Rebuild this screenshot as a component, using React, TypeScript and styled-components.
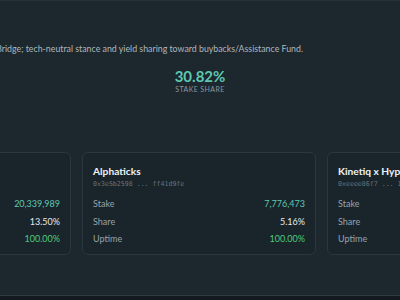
import styled, { createGlobalStyle } from 'styled-components'

const GlobalStyle = createGlobalStyle`
	html, body {
		margin: 0;
		padding: 0;
		background: #131b21;
		width: 400px;
		height: 300px;
		overflow: hidden;
		font-family: Lato, "Noto Sans", sans-serif;
	}
`

const Panel = styled.section`
	height: 294px;
	border-top: 1px solid #24323a;
	border-bottom: 1px solid #2c3a43;
	background: #1c272e;
	overflow: hidden;
	display: flex;
	flex-direction: column;
`

const Description = styled.p`
	margin: 40px 0 0 -40px;
	white-space: nowrap;
	font-size: 8.8px;
	line-height: 16px;
	color: #aeb8bf;
`

const Stat = styled.div`
	display: flex;
	flex-direction: column;
	align-items: center;
	margin-top: 9px;
`

const StatValue = styled.div`
	font-size: 15px;
	font-weight: 700;
	line-height: 20px;
	color: #5ec8b2;
`

const StatLabel = styled.div`
	margin-top: -3px;
	font-size: 7px;
	line-height: 12px;
	letter-spacing: 0.4px;
	color: #8a979f;
	text-transform: uppercase;
`

const CardRow = styled.div`
	display: flex;
	gap: 11px;
	margin: 57px 0 0 -163px;
`

const Card = styled.div`
	flex: 0 0 234px;
	box-sizing: border-box;
	height: 103px;
	padding: 10px 10px 0 10px;
	border: 1px solid #2a3740;
	border-radius: 6px;
	background: #1a252b;
`

const Title = styled.div`
	font-size: 10.2px;
	font-weight: 700;
	line-height: 16px;
	color: #eef2f4;
	white-space: nowrap;
`

const Address = styled.div`
	margin-top: -1px;
	font-family: "DejaVu Sans Mono", "Liberation Mono", monospace;
	font-size: 6.6px;
	line-height: 12px;
	color: #66747d;
	white-space: nowrap;
`

const Rows = styled.div`
	display: flex;
	flex-direction: column;
	margin-top: 5px;
`

const Row = styled.div`
	display: flex;
	justify-content: space-between;
	align-items: center;
	height: 17.6px;
	font-size: 9px;
`

const Label = styled.span`
	color: #97a3ab;
`

const Value = styled.span<{ $tone: 'teal' | 'plain' | 'green' }>`
	color: ${p => (p.$tone === 'teal' ? '#5ec8b2' : p.$tone === 'green' ? '#4ec97a' : '#e6eaec')};
`

interface Validator {
	name: string
	address: string
	stake: string
	share: string
	uptime: string
}

const validators: Validator[] = [
	{ name: 'Hyper Foundation 1', address: '0x5ac99df6 ... 2b8c6a1e', stake: '20,339,989', share: '13.50%', uptime: '100.00%' },
	{ name: 'Alphaticks', address: '0x3e5b2598 ... ff41d9fe', stake: '7,776,473', share: '5.16%', uptime: '100.00%' },
	{ name: 'Kinetiq x Hyperion', address: '0xeeee86f7 ... 1c7e5d42', stake: '6,912,204', share: '4.59%', uptime: '100.00%' },
]

export default function App() {
	return (
		<>
			<GlobalStyle />
			<Panel>
				<Description>
					Runs the Bridge; tech-neutral stance and yield sharing toward buybacks/Assistance Fund.
				</Description>
				<Stat>
					<StatValue>30.82%</StatValue>
					<StatLabel>Stake share</StatLabel>
				</Stat>
				<CardRow>
					{validators.map(v => (
						<Card key={v.name}>
							<Title>{v.name}</Title>
							<Address>{v.address}</Address>
							<Rows>
								<Row>
									<Label>Stake</Label>
									<Value $tone="teal">{v.stake}</Value>
								</Row>
								<Row>
									<Label>Share</Label>
									<Value $tone="plain">{v.share}</Value>
								</Row>
								<Row>
									<Label>Uptime</Label>
									<Value $tone="green">{v.uptime}</Value>
								</Row>
							</Rows>
						</Card>
					))}
				</CardRow>
			</Panel>
		</>
	)
}
